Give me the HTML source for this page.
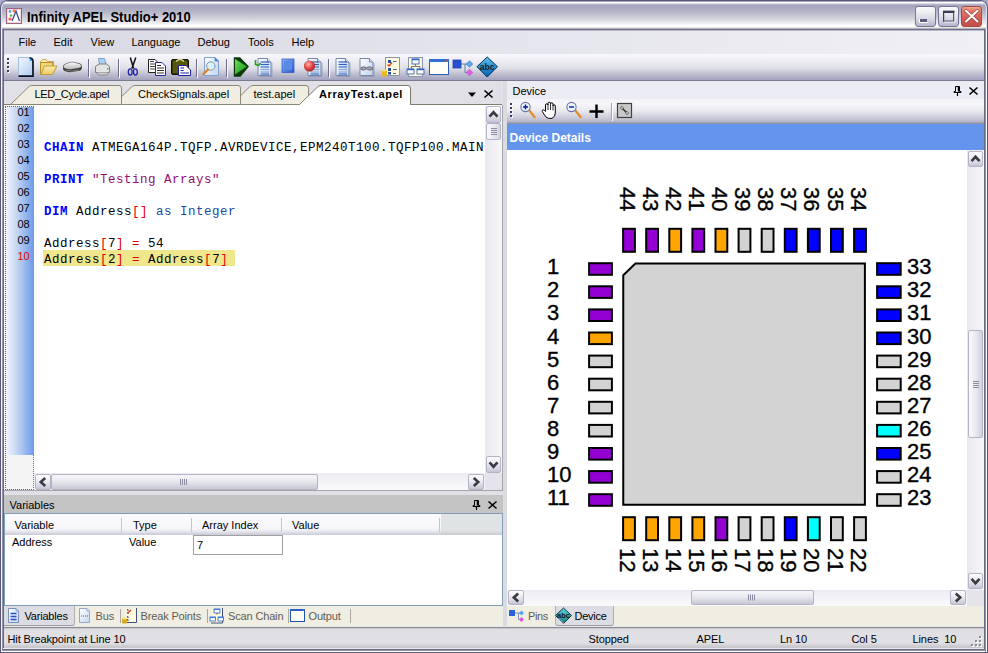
<!DOCTYPE html>
<html><head><meta charset="utf-8">
<style>
*{margin:0;padding:0;box-sizing:border-box}
html,body{width:988px;height:653px;overflow:hidden;background:#e3e3eb;font-family:"Liberation Sans",sans-serif;font-size:11px;color:#000}
.a{position:absolute}
.t{position:absolute;white-space:nowrap;line-height:1}
.mono{font-family:"Liberation Mono",monospace}
.sb{border:1px solid #b4b4c6;border-radius:2px}
svg{position:absolute;overflow:visible}
</style></head><body>

<div class="a" style="left:0;top:0;width:988px;height:10px;background:#a8a8c8"></div>
<div class="a" style="left:0;top:0;width:988px;height:31px;border-radius:8px 8px 0 0;background:#5a5a78"></div>
<div class="a" style="left:1px;top:1px;width:986px;height:30px;border-radius:7px 7px 0 0;box-shadow:inset 1px 0 0 #e4e4ee,inset -1px 0 0 #e4e4ee;background:linear-gradient(#a4a4bc 0px,#a4a4bc 1px,#ffffff 1px,#ffffff 2px,#dcdce6 2px,#dcdce6 3px,#b8b8cc 3px,#b8b8cc 4px,#a6a6c2 4px,#a8a8c2 6px,#b6b6c8 11px,#d4d4de 18px,#f2f2f4 23px,#ffffff 24px,#ffffff 26px,#e8e6dc 26px,#e8e6dc 27px,#b4b4c4 27px,#b4b4c4 28px,#70708a 28px,#70708a 29px,#b8b8c8 29px,#b8b8c8 30px)"></div>
<div class="t" style="left:27px;top:10px;font-size:14px;font-weight:bold;color:#000;transform-origin:0 0;transform:scaleX(0.925);white-space:pre">Infinity APEL Studio+ 2010</div>

<div class="a" style="left:915px;top:6px;width:21px;height:21px;border:1px solid #76769a;border-radius:3px;background:linear-gradient(#fafafc 0,#ececf2 30%,#d4d4e2 70%,#b4b4cc 100%)"></div>
<div class="a" style="left:938px;top:6px;width:21px;height:21px;border:1px solid #76769a;border-radius:3px;background:linear-gradient(#fafafc 0,#ececf2 30%,#d4d4e2 70%,#b4b4cc 100%)"></div>
<div class="a" style="left:961px;top:6px;width:21px;height:21px;border:1px solid #a44a48;border-radius:3px;background:linear-gradient(#f0a890 0,#e07868 20%,#d45c54 60%,#c44c48 100%)"></div>
<svg style="left:0;top:0" width="1" height="1"><rect x="920" y="19" width="7" height="3" fill="#5a5a7c"/><path d="M919.5 19v3.5h8" stroke="#fff" stroke-width="1" fill="none"/><rect x="943.6" y="11.4" width="10.2" height="9.8" fill="none" stroke="#3c3c54" stroke-width="1.2"/><rect x="943" y="10.8" width="11.4" height="2.2" fill="#3c3c54"/><path d="M944 22H955V12" fill="none" stroke="#fff" stroke-width="0.8"/><path d="M966 10.8L977.5 21.5M977.5 10.8L966 21.5" stroke="#8a3a38" stroke-width="3.2" stroke-linecap="round"/><path d="M966 10.8L977.5 21.5M977.5 10.8L966 21.5" stroke="#fff" stroke-width="2.1" stroke-linecap="round"/></svg>
<svg style="left:0;top:0" width="1" height="1"><rect x="6.5" y="8.5" width="15" height="15" fill="#fff" stroke="#a06080" stroke-width="1"/><rect x="7.5" y="9.5" width="13" height="13" fill="none" stroke="#e8d0d8" stroke-width="0.8"/><path d="M12 21L16 11L19.5 21" fill="none" stroke="#404890" stroke-width="1.3"/><circle cx="10" cy="11.5" r="1.4" fill="#60a0e0"/><circle cx="14" cy="11" r="1.4" fill="#f07040"/><circle cx="11" cy="15.5" r="1.3" fill="#60b060"/><circle cx="10" cy="19" r="1.6" fill="#f06040"/></svg>
<div class="a" style="left:4px;top:31px;width:980px;height:23px;background:linear-gradient(90deg,#d8d8e4,#f0f0f4)"></div>
<div class="t" style="left:18.5px;top:37px">File</div>
<div class="t" style="left:53.5px;top:37px">Edit</div>
<div class="t" style="left:90.5px;top:37px">View</div>
<div class="t" style="left:131.5px;top:37px">Language</div>
<div class="t" style="left:197.5px;top:37px">Debug</div>
<div class="t" style="left:248px;top:37px">Tools</div>
<div class="t" style="left:291.5px;top:37px">Help</div>
<div class="a" style="left:4px;top:54px;width:980px;height:27px;border-radius:3px 0 0 0;background:linear-gradient(#f8f8fc 0,#f0f0f6 5px,#e2e2ea 13px,#dcdce6 15px,#c4c4d4 19px,#a6a6c2 25px,#a4a4c0 26px,#7a7a92 26px,#7a7a92 27px)"></div>
<svg style="left:0;top:0" width="1" height="1"><defs><linearGradient id="gdoc" x1="0" y1="0" x2="1" y2="1"><stop offset="0" stop-color="#ffffff"/><stop offset="1" stop-color="#c0d4f0"/></linearGradient><linearGradient id="gnew" x1="0" y1="0" x2="1" y2="1"><stop offset="0" stop-color="#f4f8ff"/><stop offset="1" stop-color="#b0ccf0"/></linearGradient><linearGradient id="gfold" x1="0" y1="0" x2="0" y2="1"><stop offset="0" stop-color="#fff0b0"/><stop offset="1" stop-color="#e8c860"/></linearGradient><linearGradient id="gplay" x1="0" y1="0" x2="1" y2="1"><stop offset="0" stop-color="#70e060"/><stop offset="1" stop-color="#109010"/></linearGradient><radialGradient id="gball" cx="0.4" cy="0.35" r="0.65"><stop offset="0" stop-color="#ffc0b0"/><stop offset="0.5" stop-color="#e85050"/><stop offset="1" stop-color="#b02020"/></radialGradient><linearGradient id="gstop" x1="0" y1="0" x2="1" y2="1"><stop offset="0" stop-color="#90b4f4"/><stop offset="1" stop-color="#2458c8"/></linearGradient><linearGradient id="gabc" x1="0" y1="0" x2="0" y2="1"><stop offset="0" stop-color="#60c0f0"/><stop offset="1" stop-color="#0060b0"/></linearGradient></defs><rect x="8" y="59" width="2" height="2" fill="#fff"/><rect x="7" y="58" width="2" height="2" fill="#3c3c64"/><rect x="8" y="63" width="2" height="2" fill="#fff"/><rect x="7" y="62" width="2" height="2" fill="#3c3c64"/><rect x="8" y="67" width="2" height="2" fill="#fff"/><rect x="7" y="66" width="2" height="2" fill="#3c3c64"/><rect x="8" y="71" width="2" height="2" fill="#fff"/><rect x="7" y="70" width="2" height="2" fill="#3c3c64"/><rect x="88" y="59" width="1" height="18" fill="#6a6a90"/><rect x="89" y="60" width="1" height="18" fill="#fff"/><rect x="118" y="59" width="1" height="18" fill="#6a6a90"/><rect x="119" y="60" width="1" height="18" fill="#fff"/><rect x="196" y="59" width="1" height="18" fill="#6a6a90"/><rect x="197" y="60" width="1" height="18" fill="#fff"/><rect x="226" y="59" width="1" height="18" fill="#6a6a90"/><rect x="227" y="60" width="1" height="18" fill="#fff"/><rect x="328" y="59" width="1" height="18" fill="#6a6a90"/><rect x="329" y="60" width="1" height="18" fill="#fff"/><path d="M18.5 57.5H29.5L32.5 60.5V75.5H18.5Z" fill="url(#gnew)" stroke="#a8c0e0" stroke-width="1"/><path d="M29.5 57.8Q33 58 33 61.5V76.2H18.5" fill="none" stroke="#0c1428" stroke-width="1.7"/><path d="M29.5 57.8L32.5 60.8L30 61Z" fill="#3a8ae8"/><path d="M40.5 61.5L43 59.5H46L47.5 61.5H53.5V66H40.5Z" fill="#fcecaa" stroke="#d0a848" stroke-width="1"/><path d="M40.5 74.5V62.5H52.5V65.5" fill="#f0d878" stroke="#b89030" stroke-width="1"/><path d="M40.8 74.5L44.5 66H57L52.5 74.5Z" fill="url(#gfold)" stroke="#c09838" stroke-width="1"/><defs><linearGradient id="gdrv" x1="0" y1="0" x2="0" y2="1"><stop offset="0" stop-color="#fafafa"/><stop offset="1" stop-color="#b8b8b8"/></linearGradient></defs><path d="M63 66.5Q63 64.5 66 63.5L70 62Q72 61.5 74 62L80 63.5Q82 64.2 81.8 66V68.5Q81.5 70.5 78 71L72 72Q69 72.5 66 71.5L64 70.5Q63 70 63 68.5Z" fill="#404040"/><path d="M63.5 66.5Q63.5 65 66 64L70 62.5Q72 62 74 62.5L79.5 64Q81.5 64.8 81.3 66.2Q80.5 67.5 77 68.2L72 69Q69 69.5 66.5 68.8L64.5 68Q63.5 67.5 63.5 66.5Z" fill="url(#gdrv)"/><path d="M66 70L72 71.2L79 69.8" stroke="#909090" stroke-width="0.8" fill="none"/><path d="M98.5 58.5H104.5L106 64.5H99.5Z" fill="#a8d0f8" stroke="#7090b0" stroke-width="0.8"/><path d="M95.5 66.5L99 64H106.5L109.5 66.5V72.5H95.5Z" fill="#e4e4e4" stroke="#808080" stroke-width="1"/><path d="M97 72.5L98.5 75H107L108.5 72.5" fill="#d0d0d0" stroke="#808080" stroke-width="0.8"/><rect x="107" y="68" width="1.5" height="1.5" fill="#40b040"/><path d="M130.3 57.5L133.6 68.5M135.8 57.5L131.9 68.5" stroke="#101010" stroke-width="1.5"/><ellipse cx="130.2" cy="72" rx="1.9" ry="3.1" fill="none" stroke="#2020a8" stroke-width="1.3"/><ellipse cx="135.4" cy="72" rx="1.9" ry="3.1" fill="none" stroke="#2020a8" stroke-width="1.3"/><path d="M148.5 59.5H155L157.5 62V72.5H148.5Z" fill="#fff" stroke="#202020" stroke-width="1"/><path d="M150 61.5H154M150 64H156M150 66.5H156M150 69H156" stroke="#404040" stroke-width="1"/><path d="M155.5 62.5H162L165.5 66V75.5H155.5Z" fill="#fff" stroke="#2828a0" stroke-width="1"/><path d="M157 65.5H161M157 68H164M157 70.5H164M157 73H164" stroke="#303030" stroke-width="1"/><rect x="171.5" y="59.5" width="17" height="15" rx="1.5" fill="#3a3a08" stroke="#101000" stroke-width="1"/><rect x="173" y="61" width="14" height="12" fill="#6a6a10" opacity="0.6"/><path d="M176 61.5Q180 57.5 184 61.5" fill="none" stroke="#d8d890" stroke-width="1.4"/><path d="M178.5 65.5H186L190.5 70V75.5H178.5Z" fill="#fff" stroke="#2020a0" stroke-width="1"/><path d="M180.5 68H184M180.5 70.5H183.5M180.5 73H189" stroke="#2020a0" stroke-width="1"/><path d="M204.5 57.5H215L218.5 61V75.5H204.5Z" fill="url(#gdoc)" stroke="#80a0d0" stroke-width="1"/><path d="M215 57.5V61H218.5" fill="#4080e0" stroke="#4080e0" stroke-width="0.8"/><circle cx="210.8" cy="66" r="4.2" fill="#d8f4ff" stroke="#8090b0" stroke-width="1"/><path d="M208 69.5L203.5 74" stroke="#e08020" stroke-width="2.2" stroke-linecap="round"/><path d="M233.8 57.2H240L249 66.6L240.5 76.7H233.8Z" fill="#0a3a0a"/><path d="M235 59L247 66.6L235 74.5Z" fill="url(#gplay)"/><path d="M258.0 58.5H267.5L271.0 62V75.5H258.0Z" fill="url(#gdoc)" stroke="#7888a8" stroke-width="1"/><path d="M267.5 58.5V62H271.0" fill="#dce6f4" stroke="#7888a8" stroke-width="1"/><path d="M259.0 76.5H272.0V63" fill="none" stroke="#8090a8" stroke-width="1" opacity="0.6"/><path d="M260.5 62H269.0" stroke="#3060c0" stroke-width="1.2"/><path d="M260.5 64.5H269.0" stroke="#3060c0" stroke-width="1.2"/><path d="M260.5 67H269.0" stroke="#4070c8" stroke-width="1.2"/><path d="M260.5 69.5H269.0" stroke="#90a8d0" stroke-width="1.2"/><path d="M260.5 72H269.0" stroke="#90a8d0" stroke-width="1.2"/><path d="M260.5 74H269.0" stroke="#4070c8" stroke-width="1.2"/><path d="M255.5 60V64.5L258.5 65.5L260.5 63" fill="none" stroke="#20a020" stroke-width="1.6"/><rect x="282" y="59" width="12" height="13.5" fill="url(#gstop)" stroke="#3060d0" stroke-width="0.8"/><rect x="284" y="61" width="8" height="9" fill="#5a88e4"/><path d="M308.0 58.5H317.5L321.0 62V75.5H308.0Z" fill="url(#gdoc)" stroke="#7888a8" stroke-width="1"/><path d="M317.5 58.5V62H321.0" fill="#dce6f4" stroke="#7888a8" stroke-width="1"/><path d="M309.0 76.5H322.0V63" fill="none" stroke="#8090a8" stroke-width="1" opacity="0.6"/><path d="M310.5 62H319.0" stroke="#3060c0" stroke-width="1.2"/><path d="M310.5 64.5H319.0" stroke="#3060c0" stroke-width="1.2"/><path d="M310.5 67H319.0" stroke="#4070c8" stroke-width="1.2"/><path d="M310.5 69.5H319.0" stroke="#90a8d0" stroke-width="1.2"/><path d="M310.5 72H319.0" stroke="#90a8d0" stroke-width="1.2"/><path d="M310.5 74H319.0" stroke="#4070c8" stroke-width="1.2"/><circle cx="309.5" cy="66" r="5.6" fill="url(#gball)"/><path d="M336.0 58.5H345.5L349.0 62V75.5H336.0Z" fill="url(#gdoc)" stroke="#7888a8" stroke-width="1"/><path d="M345.5 58.5V62H349.0" fill="#dce6f4" stroke="#7888a8" stroke-width="1"/><path d="M337.0 76.5H350.0V63" fill="none" stroke="#8090a8" stroke-width="1" opacity="0.6"/><path d="M338.5 62H347.0" stroke="#3060c0" stroke-width="1.2"/><path d="M338.5 64.5H347.0" stroke="#3060c0" stroke-width="1.2"/><path d="M338.5 67H347.0" stroke="#4070c8" stroke-width="1.2"/><path d="M338.5 69.5H347.0" stroke="#90a8d0" stroke-width="1.2"/><path d="M338.5 72H347.0" stroke="#90a8d0" stroke-width="1.2"/><path d="M338.5 74H347.0" stroke="#4070c8" stroke-width="1.2"/><path d="M360.0 58.5H369.5L373.0 62V75.5H360.0Z" fill="url(#gdoc)" stroke="#7888a8" stroke-width="1"/><path d="M369.5 58.5V62H373.0" fill="#dce6f4" stroke="#7888a8" stroke-width="1"/><path d="M361.0 76.5H374.0V63" fill="none" stroke="#8090a8" stroke-width="1" opacity="0.6"/><path d="M361 67.5Q363.5 66 366.5 67.5Q369.5 66 372.5 67.5V69.5Q369.5 71 366.5 69Q363.5 71 361 69.5Z" fill="#a0a0a8" stroke="#606070" stroke-width="0.8"/><rect x="385.5" y="57.5" width="14" height="18" fill="#fffadc" stroke="#8898b0" stroke-width="1"/><rect x="388" y="60" width="3" height="3" fill="#2050a0"/><rect x="388" y="68" width="3" height="3" fill="#2050a0"/><rect x="388" y="72" width="3" height="2.5" fill="#2050a0"/><path d="M387.5 64.5L389 66L392 62.5" fill="none" stroke="#e04020" stroke-width="1.4"/><path d="M393 61.5H396.5M393 69.5H397M393 73.5H396" stroke="#5060a0" stroke-width="1"/><rect x="382" y="70" width="5" height="6.5" rx="1" fill="#e8b820"/><ellipse cx="384.5" cy="70.5" rx="2.5" ry="1" fill="#f8e080"/><rect x="408.5" y="57.5" width="14" height="19" fill="#fffadc" stroke="#8898b0" stroke-width="1"/><path d="M415.5 64V66.5H411.5V69M415.5 66.5H420V69" fill="none" stroke="#707888" stroke-width="1"/><rect x="412" y="59" width="7" height="5" fill="#fff" stroke="#5070b0" stroke-width="1"/><rect x="407" y="69" width="7" height="5" fill="#fff" stroke="#5070b0" stroke-width="1"/><rect x="417" y="69" width="7" height="5" fill="#fff" stroke="#5070b0" stroke-width="1"/><path d="M412 59.5H419M407 69.5H414M417 69.5H424" stroke="#3068d0" stroke-width="1.5"/><rect x="429.5" y="59.5" width="19" height="15" fill="#fffff8" stroke="#2a5cb8" stroke-width="1"/><rect x="429" y="59" width="20" height="3" fill="#3070d0"/><rect x="446" y="59.8" width="1.5" height="1.5" fill="#f06020"/><path d="M461 64H465V72.5H467" fill="none" stroke="#6080a8" stroke-width="1"/><path d="M465 64H467" stroke="#6080a8" stroke-width="1"/><rect x="453" y="60" width="8" height="8" fill="#2850d0" stroke="#2040b0" stroke-width="0.8"/><path d="M469.5 60.8L472.8 64L469.5 67.2L466.2 64Z" fill="#60a8f0" stroke="#3070c0" stroke-width="0.6"/><path d="M469.5 69.3L472.8 72.5L469.5 75.7L466.2 72.5Z" fill="#e060e0" stroke="#c040c0" stroke-width="0.6"/><path d="M487.2 57L497.5 66.7L487.2 77L477 66.7Z" fill="url(#gabc)" stroke="#003060" stroke-width="1"/><text x="487.2" y="69.5" font-family="Liberation Sans" font-size="8.5" font-weight="bold" fill="#1a1a28" text-anchor="middle">abc</text></svg>
<div class="a" style="left:4px;top:81px;width:498px;height:24px;background:#e0e0e6"></div>
<svg style="left:0;top:0" width="1" height="1">
 <line x1="4" y1="104.5" x2="502" y2="104.5" stroke="#7e7a6c" stroke-width="1"/>
 <path d="M231.5 104.5 L249 87.5 Q250.5 85.5 253 85.5 L306 85.5 Q308.5 85.5 308.5 88 L308.5 104.5 Z" fill="#f0eee2" stroke="#8c8878" stroke-width="1"/>
 <path d="M113.5 104.5 L131 87.5 Q132.5 85.5 135 85.5 L238 85.5 Q240.5 85.5 240.5 88 L240.5 104.5 Z" fill="#f0eee2" stroke="#8c8878" stroke-width="1"/>
 <path d="M10.5 104.5 L28 87.5 Q29.5 85.5 32 85.5 L119 85.5 Q121.5 85.5 121.5 88 L121.5 104.5 Z" fill="#f0eee2" stroke="#8c8878" stroke-width="1"/>
 <path d="M299.5 104.5 L317 87.5 Q318.5 85.5 321 85.5 L408 85.5 Q410.5 85.5 410.5 88 L410.5 104.5" fill="#ffffff" stroke="#7e7a6c" stroke-width="1"/>
 <rect x="300" y="104" width="110" height="1.5" fill="#fff"/>
 <path d="M468 92.5 L476 92.5 L472 97 Z" fill="#000"/>
 <path d="M484.5 90.5 L492.5 97.5 M492.5 90.5 L484.5 97.5" stroke="#000" stroke-width="1.6"/>
</svg>
<div class="t" style="left:34.5px;top:89px;letter-spacing:-0.3px">LED_Cycle.apel</div>
<div class="t" style="left:138px;top:89px">CheckSignals.apel</div>
<div class="t" style="left:253.5px;top:89px">test.apel</div>
<div class="t" style="left:319px;top:89px;font-weight:bold;letter-spacing:0.6px">ArrayTest.apel</div>

<div class="a" style="left:4px;top:105px;width:499px;height:386px;background:#fff;border-right:1px solid #a4a4ac;border-bottom:1px solid #a4a4ac"></div>
<div class="a" style="left:5px;top:106px;width:29px;height:384px;background:#f4f4f4;border-left:1px dotted #5a6478;border-top:1px dotted #5a6478;border-bottom:1px dotted #5a6478"></div>
<div class="a" style="left:6px;top:107px;width:28px;height:348px;background:linear-gradient(90deg,#f4f6fc 0,#c8d8f4 10px,#6c9ae8 28px)"></div>
<div class="a" style="left:33px;top:455px;width:1px;height:35px;border-right:1px dotted #3a7ae8"></div>

<div class="t" style="left:17.5px;top:107px;color:#000">01</div>
<div class="t" style="left:17.5px;top:123px;color:#000">02</div>
<div class="t" style="left:17.5px;top:139px;color:#000">03</div>
<div class="t" style="left:17.5px;top:155px;color:#000">04</div>
<div class="t" style="left:17.5px;top:171px;color:#000">05</div>
<div class="t" style="left:17.5px;top:187px;color:#000">06</div>
<div class="t" style="left:17.5px;top:203px;color:#000">07</div>
<div class="t" style="left:17.5px;top:219px;color:#000">08</div>
<div class="t" style="left:17.5px;top:235px;color:#000">09</div>
<div class="t" style="left:17.5px;top:251px;color:#e00000">10</div>
<div class="a" style="left:43px;top:250px;width:192px;height:16px;background:#f0e68c"></div>
<div class="mono" style="position:absolute;left:44px;top:107.5px;font-size:12.5px;letter-spacing:0.5px;line-height:16px;white-space:pre;color:#000">

<span style="color:#0000ff;font-weight:bold">CHAIN</span> ATMEGA164P.TQFP.AVRDEVICE,EPM240T100.TQFP100.MAIN

<span style="color:#0000ff;font-weight:bold">PRINT</span> <span style="color:#960c70">"Testing Arrays"</span>

<span style="color:#0000ff;font-weight:bold">DIM</span> Address<span style="color:#e00000">[]</span> <span style="color:#1c4aa0">as Integer</span>

Address<span style="color:#e00000">[</span>7<span style="color:#e00000">]</span> <span style="color:#e00000">=</span> 54
Address<span style="color:#e00000">[</span>2<span style="color:#e00000">]</span> <span style="color:#e00000">=</span> Address<span style="color:#e00000">[</span>7<span style="color:#e00000">]</span>
</div>
<div class="a" style="left:485px;top:106px;width:17px;height:367px;background:linear-gradient(90deg,#e8e8ee,#f8f8fa)"></div>
<div class="a" style="left:34px;top:473px;width:451px;height:17px;background:linear-gradient(#ececf2,#fafafc)"></div>
<div class="a" style="left:485px;top:473px;width:17px;height:17px;background:#e4e4ea"></div>
<div class="a sb" style="left:486px;top:106px;width:15px;height:17px;background:linear-gradient(#fdfdfe 0,#f0f0f6 35%,#d8d8e4 75%,#c4c4d4 100%)"></div><svg style="left:0;top:0" width="1" height="1"><path d="M489.5 116.7 L493.5 112.3 L497.5 116.7" fill="none" stroke="#3a3a42" stroke-width="2.6" stroke-linejoin="miter"/></svg>
<div class="a sb" style="left:486px;top:456px;width:15px;height:17px;background:linear-gradient(#fdfdfe 0,#f0f0f6 35%,#d8d8e4 75%,#c4c4d4 100%)"></div><svg style="left:0;top:0" width="1" height="1"><path d="M489.5 462.3 L493.5 466.7 L497.5 462.3" fill="none" stroke="#3a3a42" stroke-width="2.6" stroke-linejoin="miter"/></svg>
<div class="a sb" style="left:35px;top:474px;width:16px;height:16px;background:linear-gradient(#fdfdfe 0,#f0f0f6 35%,#d8d8e4 75%,#c4c4d4 100%)"></div><svg style="left:0;top:0" width="1" height="1"><path d="M45.2 478.0 L40.8 482.0 L45.2 486.0" fill="none" stroke="#3a3a42" stroke-width="2.6" stroke-linejoin="miter"/></svg>
<div class="a sb" style="left:468px;top:474px;width:16px;height:16px;background:linear-gradient(#fdfdfe 0,#f0f0f6 35%,#d8d8e4 75%,#c4c4d4 100%)"></div><svg style="left:0;top:0" width="1" height="1"><path d="M473.8 478.0 L478.2 482.0 L473.8 486.0" fill="none" stroke="#3a3a42" stroke-width="2.6" stroke-linejoin="miter"/></svg>
<div class="a sb" style="left:486px;top:123px;width:15px;height:17px;background:linear-gradient(90deg,#fafafd,#e6e6ee 60%,#d0d0dc)"></div>
<svg style="left:0;top:0" width="1" height="1"><path d="M491 128.5h6M491 130.5h6M491 132.5h6M491 134.5h6" stroke="#8c8ca0" stroke-width="1"/></svg>
<div class="a sb" style="left:51px;top:474px;width:267px;height:16px;background:linear-gradient(#f6f6fa,#e6e6ee 50%,#c8c8d6)"></div>
<svg style="left:0;top:0" width="1" height="1"><path d="M180.5 479v6M182.5 479v6M184.5 479v6M186.5 479v6" stroke="#8c8ca0" stroke-width="1"/></svg>
<div class="a" style="left:4px;top:491px;width:499px;height:4px;background:#e0e0e6"></div>
<div class="a" style="left:503px;top:81px;width:4px;height:546px;background:#dcdce0"></div>
<div class="a" style="left:4px;top:495px;width:499px;height:18px;background:#c4c4c4"></div>
<div class="t" style="left:9.5px;top:500px">Variables</div>
<svg style="left:0;top:0" width="1" height="1"><path d="M474.5 500.5h4v5h1.5v1h-7v-1h1.5z" fill="none" stroke="#000" stroke-width="1"/><path d="M476.5 506v4" stroke="#000" stroke-width="1.2"/><path d="M477.5 501v4.5" stroke="#000" stroke-width="1.5"/><path d="M488.5 501.5L496.5 508.5M496.5 501.5L488.5 508.5" stroke="#000" stroke-width="1.6"/></svg>
<div class="a" style="left:4px;top:513px;width:499px;height:93px;background:#fff;border:1px solid #7f9db9"></div>
<div class="a" style="left:5px;top:514px;width:436px;height:21px;background:linear-gradient(#fbfbfe 0,#f6f6fa 70%,#e4e4ec 85%,#c8c8d8 100%)"></div>
<div class="a" style="left:441px;top:514px;width:61px;height:21px;background:linear-gradient(#dfe3e3 0,#dfe3e3 80%,#c8cccc 100%)"></div>
<div class="a" style="left:121.0px;top:518px;width:1px;height:14px;background:#c4c4d4"></div>
<div class="a" style="left:191.0px;top:518px;width:1px;height:14px;background:#c4c4d4"></div>
<div class="a" style="left:281.0px;top:518px;width:1px;height:14px;background:#c4c4d4"></div>
<div class="a" style="left:439.0px;top:518px;width:1px;height:14px;background:#c4c4d4"></div>
<div class="t" style="left:14.5px;top:520px">Variable</div>
<div class="t" style="left:133px;top:520px">Type</div>
<div class="t" style="left:202px;top:520px">Array Index</div>
<div class="t" style="left:292px;top:520px">Value</div>
<div class="t" style="left:12px;top:537px">Address</div>
<div class="t" style="left:129px;top:537px">Value</div>
<div class="a" style="left:193px;top:535px;width:90px;height:20px;border:1px solid #a0a0a0;background:#fff"></div>
<div class="t" style="left:197px;top:540px">7</div>
<div class="a" style="left:4px;top:606px;width:499px;height:21px;background:#f0eee2"></div>
<div class="a" style="left:4px;top:606px;width:71px;height:20px;background:#dcdce4;border-right:1px solid #b0b0b8;border-bottom:1px solid #9c9ca4;border-radius:0 0 3px 0"></div>
<div class="t" style="left:24.5px;top:611px;letter-spacing:-0.2px">Variables</div>
<div class="t" style="left:95.5px;top:611px;color:#5e5c54;letter-spacing:-0.15px">Bus</div>
<div class="t" style="left:140.5px;top:611px;color:#5e5c54;letter-spacing:-0.15px">Break Points</div>
<div class="t" style="left:228px;top:611px;color:#5e5c54;letter-spacing:-0.15px">Scan Chain</div>
<div class="t" style="left:308.5px;top:611px;color:#5e5c54;letter-spacing:-0.15px">Output</div>
<div class="a" style="left:120.0px;top:609px;width:1px;height:14px;background:#a8a8a0"></div>
<div class="a" style="left:207.0px;top:609px;width:1px;height:14px;background:#a8a8a0"></div>
<div class="a" style="left:288.0px;top:609px;width:1px;height:14px;background:#a8a8a0"></div>
<div class="a" style="left:350.0px;top:609px;width:1px;height:14px;background:#a8a8a0"></div>
<div class="a" style="left:507px;top:81px;width:477px;height:18px;background:#ececf4"></div>
<div class="t" style="left:512.5px;top:86px">Device</div>
<svg style="left:0;top:0" width="1" height="1"><path d="M955.5 86.5h4v5h1.5v1h-7v-1h1.5z" fill="none" stroke="#000" stroke-width="1"/><path d="M957.5 92v4" stroke="#000" stroke-width="1.2"/><path d="M958.5 87v4.5" stroke="#000" stroke-width="1.5"/><path d="M969.5 87.5L977.5 94.5M977.5 87.5L969.5 94.5" stroke="#000" stroke-width="1.6"/></svg>
<div class="a" style="left:507px;top:99px;width:477px;height:25px;border-radius:3px 0 0 0;background:linear-gradient(#f4f4f8 0,#f6f6fa 5px,#e8e8ee 12px,#cacada 19px,#b4b4c8 23px,#9090a8 24px)"></div>
<svg style="left:0;top:0" width="1" height="1"><rect x="511" y="104" width="2" height="2" fill="#fff"/><rect x="510" y="103" width="2" height="2" fill="#3c3c64"/><rect x="511" y="108" width="2" height="2" fill="#fff"/><rect x="510" y="107" width="2" height="2" fill="#3c3c64"/><rect x="511" y="112" width="2" height="2" fill="#fff"/><rect x="510" y="111" width="2" height="2" fill="#3c3c64"/><rect x="511" y="116" width="2" height="2" fill="#fff"/><rect x="510" y="115" width="2" height="2" fill="#3c3c64"/><path d="M529 110L534.5 117" stroke="#e09030" stroke-width="2.4" stroke-linecap="round"/><circle cx="525.5" cy="107" r="4.6" fill="#e8f8ff" stroke="#7070a0" stroke-width="1.1"/><path d="M523 107H528M525.5 104.5V109.5" stroke="#1010a0" stroke-width="1.4"/><path d="M545.5 110.5V105Q545.5 103.8 546.7 103.8Q548 103.8 548 105V103.5Q548 102.2 549.2 102.2Q550.5 102.2 550.5 103.5V104Q550.5 102.8 551.7 102.8Q553 102.8 553 104V106Q553 104.8 554.1 104.8Q555.3 104.8 555.3 106V113Q555.3 117 552 118.3H548.5Q546 117.8 544.5 115L542.3 111.5Q541.8 110 543.2 109.8Q544.3 109.8 545.5 111.5Z" fill="#fff" stroke="#000" stroke-width="1"/><path d="M548 105V110M550.5 104V110M553 106V110.5" stroke="#000" stroke-width="0.8"/><path d="M575 110L580.5 117" stroke="#e09030" stroke-width="2.4" stroke-linecap="round"/><circle cx="571.5" cy="107" r="4.6" fill="#e8f8ff" stroke="#7070a0" stroke-width="1.1"/><path d="M569 107H574" stroke="#1010a0" stroke-width="1.4"/><path d="M589.5 111.5H603.5M596.5 104.5V118" stroke="#000" stroke-width="2.4"/><rect x="611" y="103" width="1" height="17" fill="#a0a0b4"/><rect x="612" y="104" width="1" height="17" fill="#fff"/><rect x="617.5" y="103.5" width="14" height="14" fill="#c8c8c8" stroke="#404040" stroke-width="1.2"/><path d="M621 107L628 114" stroke="#202020" stroke-width="1.2"/><circle cx="622" cy="108" r="1.3" fill="#fff" stroke="#202020" stroke-width="0.6"/><circle cx="627" cy="113" r="1.3" fill="#fff" stroke="#202020" stroke-width="0.6"/></svg>
<div class="a" style="left:507px;top:124px;width:477px;height:26px;background:#6495ed"></div>
<div class="t" style="left:509.5px;top:131.5px;font-size:12px;font-weight:bold;color:#fff">Device Details</div>
<div class="a" style="left:507px;top:150px;width:477px;height:440px;background:#fff"></div>
<div class="a" style="left:967px;top:150px;width:17px;height:440px;background:linear-gradient(90deg,#e8e8ee,#f8f8fa)"></div>
<div class="a" style="left:507px;top:590px;width:460px;height:16px;background:linear-gradient(#ececf2,#fafafc)"></div>
<div class="a" style="left:967px;top:590px;width:17px;height:16px;background:#e4e4ea"></div>
<div class="a sb" style="left:968px;top:151px;width:15px;height:16px;background:linear-gradient(#fdfdfe 0,#f0f0f6 35%,#d8d8e4 75%,#c4c4d4 100%)"></div><svg style="left:0;top:0" width="1" height="1"><path d="M971.5 161.2 L975.5 156.8 L979.5 161.2" fill="none" stroke="#3a3a42" stroke-width="2.6" stroke-linejoin="miter"/></svg>
<div class="a sb" style="left:968px;top:573px;width:15px;height:16px;background:linear-gradient(#fdfdfe 0,#f0f0f6 35%,#d8d8e4 75%,#c4c4d4 100%)"></div><svg style="left:0;top:0" width="1" height="1"><path d="M971.5 578.8 L975.5 583.2 L979.5 578.8" fill="none" stroke="#3a3a42" stroke-width="2.6" stroke-linejoin="miter"/></svg>
<div class="a sb" style="left:508px;top:590px;width:16px;height:15px;background:linear-gradient(#fdfdfe 0,#f0f0f6 35%,#d8d8e4 75%,#c4c4d4 100%)"></div><svg style="left:0;top:0" width="1" height="1"><path d="M518.2 593.5 L513.8 597.5 L518.2 601.5" fill="none" stroke="#3a3a42" stroke-width="2.6" stroke-linejoin="miter"/></svg>
<div class="a sb" style="left:950px;top:590px;width:16px;height:15px;background:linear-gradient(#fdfdfe 0,#f0f0f6 35%,#d8d8e4 75%,#c4c4d4 100%)"></div><svg style="left:0;top:0" width="1" height="1"><path d="M955.8 593.5 L960.2 597.5 L955.8 601.5" fill="none" stroke="#3a3a42" stroke-width="2.6" stroke-linejoin="miter"/></svg>
<div class="a sb" style="left:968px;top:330px;width:15px;height:108px;background:linear-gradient(90deg,#fafafd,#e6e6ee 60%,#d0d0dc)"></div>
<svg style="left:0;top:0" width="1" height="1"><path d="M973 381.5h6M973 383.5h6M973 385.5h6M973 387.5h6" stroke="#8c8ca0" stroke-width="1"/></svg>
<div class="a sb" style="left:691px;top:590px;width:123px;height:15px;background:linear-gradient(#f6f6fa,#e6e6ee 50%,#c8c8d6)"></div>
<svg style="left:0;top:0" width="1" height="1"><path d="M748.5 594.5v6M750.5 594.5v6M752.5 594.5v6M754.5 594.5v6" stroke="#8c8ca0" stroke-width="1"/></svg>
<div class="a" style="left:507px;top:606px;width:477px;height:21px;background:#f0eee2"></div>
<div class="a" style="left:555px;top:606px;width:59px;height:20px;background:#dcdce4;border-left:1px solid #b0b0b8;border-right:1px solid #b0b0b8;border-bottom:1px solid #9c9ca4;border-radius:0 0 3px 3px"></div>
<div class="t" style="left:528px;top:611px;color:#5e5c54;letter-spacing:-0.4px">Pins</div>
<div class="t" style="left:574.5px;top:611px;letter-spacing:-0.25px">Device</div>
<svg style="left:0;top:0" width="1" height="1"><defs><linearGradient id="gdoc2" x1="0" y1="0" x2="1" y2="1"><stop offset="0" stop-color="#ffffff"/><stop offset="1" stop-color="#c4d6f0"/></linearGradient><linearGradient id="gteal" x1="0" y1="0" x2="0" y2="1"><stop offset="0" stop-color="#60d0e0"/><stop offset="1" stop-color="#108080"/></linearGradient></defs><path d="M8.5 608.5H16L18.5 611V622.5H8.5Z" fill="url(#gdoc2)" stroke="#7890b8" stroke-width="1"/><path d="M16 608.5V611H18.5" fill="#c8d8f0" stroke="#7890b8" stroke-width="0.8"/><path d="M10.5 613.5H16.5M10.5 616.5H16.5M10.5 619.5H16.5" stroke="#2a50c8" stroke-width="1.3"/><path d="M79.5 608.5H87L89.5 611V622.5H79.5Z" fill="url(#gdoc2)" stroke="#98a8c8" stroke-width="1"/><path d="M87 608.5V611H89.5" fill="#c8d8f0" stroke="#98a8c8" stroke-width="0.8"/><path d="M81 616H88.5" stroke="#506090" stroke-width="1" stroke-dasharray="1 1"/><path d="M125.5 608.5H136.5V622.5H125.5Z" fill="#fffadc" stroke="none"/><path d="M136.5 608V622.5H126" fill="none" stroke="#405080" stroke-width="1"/><path d="M127 609.5L128.5 610.5M127 612.5L128.5 613.5M127 616.5L128.5 617.5M127 619.5L128.5 620.5" stroke="#1a3a90" stroke-width="1.3"/><path d="M128 613L131 610" stroke="#e03820" stroke-width="1.2"/><rect x="122" y="618" width="5" height="5.5" rx="0.8" fill="#d8a820"/><ellipse cx="124.5" cy="618.5" rx="2.5" ry="0.9" fill="#f8e080"/><path d="M212 608.5H222.5V623H212Z" fill="#fffadc"/><path d="M222.5 608V623H211" fill="none" stroke="#405080" stroke-width="1"/><rect x="214" y="609" width="6" height="4" fill="#fff" stroke="#3060c0" stroke-width="0.8"/><path d="M214 609.5H220" stroke="#3a80e8" stroke-width="1.2"/><rect x="210" y="617" width="5.5" height="4" fill="#fff" stroke="#3060c0" stroke-width="0.8"/><path d="M210 617.5H215.5" stroke="#3a80e8" stroke-width="1.2"/><rect x="218" y="617" width="5.5" height="4" fill="#fff" stroke="#3060c0" stroke-width="0.8"/><path d="M218 617.5H223.5" stroke="#3a80e8" stroke-width="1.2"/><path d="M217 613V614.5" stroke="#405080" stroke-width="1"/><rect x="290.5" y="609.5" width="14" height="12" fill="#fffff4" stroke="#2050b0" stroke-width="1"/><rect x="290" y="609" width="15" height="2" fill="#2a60c8"/><rect x="303" y="609.5" width="1.2" height="1.2" fill="#f06020"/><path d="M515 613H518.5V619.5H520" fill="none" stroke="#8090b0" stroke-width="1"/><path d="M518.5 613H520" stroke="#8090b0" stroke-width="1"/><rect x="509" y="610" width="6" height="6" fill="#2a60e0"/><path d="M521.5 610.5L524 613L521.5 615.5L519 613Z" fill="#50a8f0"/><path d="M521.5 617L524 619.5L521.5 622L519 619.5Z" fill="#e050e0"/><path d="M563.5 608L571.5 615.5L563.5 623.5L555.5 615.5Z" fill="url(#gteal)" stroke="#103838" stroke-width="1"/><path d="M558 618L564 623.5" stroke="#f0f0f0" stroke-width="0.8" opacity="0.6"/><text x="563.5" y="618" font-family="Liberation Sans" font-size="7.5" font-weight="bold" fill="#101820" text-anchor="middle">abc</text></svg>
<div class="a" style="left:4px;top:626px;width:980px;height:22px;background:linear-gradient(#e8e8ec 0,#e8e8ec 1px,#8a8a90 1px,#8a8a90 2px,#b8b8c0 2px,#d8d8de 3px,#dfdfe4 4px,#dfdfe4 17px,#d4d4d8 19px,#c8c8cc 21px,#c8c8cc 22px)"></div>
<div class="t" style="left:7.5px;top:634px;letter-spacing:-0.1px">Hit Breakpoint at Line 10</div>
<div class="t" style="left:588.5px;top:634px;letter-spacing:-0.1px">Stopped</div>
<div class="t" style="left:696.5px;top:634px;letter-spacing:-0.1px">APEL</div>
<div class="t" style="left:780px;top:634px;letter-spacing:-0.1px">Ln 10</div>
<div class="t" style="left:851.5px;top:634px;letter-spacing:-0.1px">Col 5</div>
<div class="t" style="left:912.5px;top:634px;letter-spacing:-0.1px">Lines&nbsp; 10</div>
<svg style="left:0;top:0" width="1" height="1"><path d="M623.25 275.2 L635.4 263.5 L864.9 263.5 L864.9 504.8 L623.25 504.8 Z" fill="#d3d3d3" stroke="#000" stroke-width="2"/><rect x="589.1" y="263.2" width="22.8" height="11.6" fill="#9400d3" stroke="#000" stroke-width="2"/><rect x="877.1" y="263.2" width="23.6" height="11.6" fill="#0000ff" stroke="#000" stroke-width="2"/><rect x="623.1" y="228.8" width="11.8" height="23" fill="#9400d3" stroke="#000" stroke-width="2"/><rect x="623.1" y="517.2" width="11.8" height="23" fill="#ffa500" stroke="#000" stroke-width="2"/><rect x="589.1" y="286.3" width="22.8" height="11.6" fill="#9400d3" stroke="#000" stroke-width="2"/><rect x="877.1" y="286.3" width="23.6" height="11.6" fill="#0000ff" stroke="#000" stroke-width="2"/><rect x="646.2" y="228.8" width="11.8" height="23" fill="#9400d3" stroke="#000" stroke-width="2"/><rect x="646.2" y="517.2" width="11.8" height="23" fill="#ffa500" stroke="#000" stroke-width="2"/><rect x="589.1" y="309.4" width="22.8" height="11.6" fill="#9400d3" stroke="#000" stroke-width="2"/><rect x="877.1" y="309.4" width="23.6" height="11.6" fill="#0000ff" stroke="#000" stroke-width="2"/><rect x="669.3000000000001" y="228.8" width="11.8" height="23" fill="#ffa500" stroke="#000" stroke-width="2"/><rect x="669.3000000000001" y="517.2" width="11.8" height="23" fill="#ffa500" stroke="#000" stroke-width="2"/><rect x="589.1" y="332.5" width="22.8" height="11.6" fill="#ffa500" stroke="#000" stroke-width="2"/><rect x="877.1" y="332.5" width="23.6" height="11.6" fill="#0000ff" stroke="#000" stroke-width="2"/><rect x="692.4000000000001" y="228.8" width="11.8" height="23" fill="#9400d3" stroke="#000" stroke-width="2"/><rect x="692.4000000000001" y="517.2" width="11.8" height="23" fill="#ffa500" stroke="#000" stroke-width="2"/><rect x="589.1" y="355.6" width="22.8" height="11.6" fill="#d3d3d3" stroke="#000" stroke-width="2"/><rect x="877.1" y="355.6" width="23.6" height="11.6" fill="#d3d3d3" stroke="#000" stroke-width="2"/><rect x="715.5" y="228.8" width="11.8" height="23" fill="#ffa500" stroke="#000" stroke-width="2"/><rect x="715.5" y="517.2" width="11.8" height="23" fill="#9400d3" stroke="#000" stroke-width="2"/><rect x="589.1" y="378.7" width="22.8" height="11.6" fill="#d3d3d3" stroke="#000" stroke-width="2"/><rect x="877.1" y="378.7" width="23.6" height="11.6" fill="#d3d3d3" stroke="#000" stroke-width="2"/><rect x="738.6" y="228.8" width="11.8" height="23" fill="#d3d3d3" stroke="#000" stroke-width="2"/><rect x="738.6" y="517.2" width="11.8" height="23" fill="#d3d3d3" stroke="#000" stroke-width="2"/><rect x="589.1" y="401.8" width="22.8" height="11.6" fill="#d3d3d3" stroke="#000" stroke-width="2"/><rect x="877.1" y="401.8" width="23.6" height="11.6" fill="#d3d3d3" stroke="#000" stroke-width="2"/><rect x="761.7" y="228.8" width="11.8" height="23" fill="#d3d3d3" stroke="#000" stroke-width="2"/><rect x="761.7" y="517.2" width="11.8" height="23" fill="#d3d3d3" stroke="#000" stroke-width="2"/><rect x="589.1" y="424.9" width="22.8" height="11.6" fill="#d3d3d3" stroke="#000" stroke-width="2"/><rect x="877.1" y="424.9" width="23.6" height="11.6" fill="#00ffff" stroke="#000" stroke-width="2"/><rect x="784.8000000000001" y="228.8" width="11.8" height="23" fill="#0000ff" stroke="#000" stroke-width="2"/><rect x="784.8000000000001" y="517.2" width="11.8" height="23" fill="#0000ff" stroke="#000" stroke-width="2"/><rect x="589.1" y="448.0" width="22.8" height="11.6" fill="#9400d3" stroke="#000" stroke-width="2"/><rect x="877.1" y="448.0" width="23.6" height="11.6" fill="#0000ff" stroke="#000" stroke-width="2"/><rect x="807.9000000000001" y="228.8" width="11.8" height="23" fill="#0000ff" stroke="#000" stroke-width="2"/><rect x="807.9000000000001" y="517.2" width="11.8" height="23" fill="#00ffff" stroke="#000" stroke-width="2"/><rect x="589.1" y="471.1" width="22.8" height="11.6" fill="#9400d3" stroke="#000" stroke-width="2"/><rect x="877.1" y="471.1" width="23.6" height="11.6" fill="#d3d3d3" stroke="#000" stroke-width="2"/><rect x="831.0" y="228.8" width="11.8" height="23" fill="#0000ff" stroke="#000" stroke-width="2"/><rect x="831.0" y="517.2" width="11.8" height="23" fill="#d3d3d3" stroke="#000" stroke-width="2"/><rect x="589.1" y="494.2" width="22.8" height="11.6" fill="#9400d3" stroke="#000" stroke-width="2"/><rect x="877.1" y="494.2" width="23.6" height="11.6" fill="#d3d3d3" stroke="#000" stroke-width="2"/><rect x="854.1" y="228.8" width="11.8" height="23" fill="#0000ff" stroke="#000" stroke-width="2"/><rect x="854.1" y="517.2" width="11.8" height="23" fill="#d3d3d3" stroke="#000" stroke-width="2"/></svg>
<div class="t" style="left:547px;top:256.2px;font-size:22px;-webkit-text-stroke:0.35px #000">1</div>
<div class="t" style="left:907px;top:256.2px;font-size:22px;-webkit-text-stroke:0.35px #000">33</div>
<div class="t" style="left:637.6px;top:186.5px;font-size:22px;-webkit-text-stroke:0.35px #000;transform-origin:0 0;transform:rotate(90deg)">44</div>
<div class="t" style="left:637.6px;top:547.5px;font-size:22px;-webkit-text-stroke:0.35px #000;transform-origin:0 0;transform:rotate(90deg)">12</div>
<div class="t" style="left:547px;top:279.3px;font-size:22px;-webkit-text-stroke:0.35px #000">2</div>
<div class="t" style="left:907px;top:279.3px;font-size:22px;-webkit-text-stroke:0.35px #000">32</div>
<div class="t" style="left:660.7px;top:186.5px;font-size:22px;-webkit-text-stroke:0.35px #000;transform-origin:0 0;transform:rotate(90deg)">43</div>
<div class="t" style="left:660.7px;top:547.5px;font-size:22px;-webkit-text-stroke:0.35px #000;transform-origin:0 0;transform:rotate(90deg)">13</div>
<div class="t" style="left:547px;top:302.4px;font-size:22px;-webkit-text-stroke:0.35px #000">3</div>
<div class="t" style="left:907px;top:302.4px;font-size:22px;-webkit-text-stroke:0.35px #000">31</div>
<div class="t" style="left:683.8000000000001px;top:186.5px;font-size:22px;-webkit-text-stroke:0.35px #000;transform-origin:0 0;transform:rotate(90deg)">42</div>
<div class="t" style="left:683.8000000000001px;top:547.5px;font-size:22px;-webkit-text-stroke:0.35px #000;transform-origin:0 0;transform:rotate(90deg)">14</div>
<div class="t" style="left:547px;top:325.5px;font-size:22px;-webkit-text-stroke:0.35px #000">4</div>
<div class="t" style="left:907px;top:325.5px;font-size:22px;-webkit-text-stroke:0.35px #000">30</div>
<div class="t" style="left:706.9000000000001px;top:186.5px;font-size:22px;-webkit-text-stroke:0.35px #000;transform-origin:0 0;transform:rotate(90deg)">41</div>
<div class="t" style="left:706.9000000000001px;top:547.5px;font-size:22px;-webkit-text-stroke:0.35px #000;transform-origin:0 0;transform:rotate(90deg)">15</div>
<div class="t" style="left:547px;top:348.6px;font-size:22px;-webkit-text-stroke:0.35px #000">5</div>
<div class="t" style="left:907px;top:348.6px;font-size:22px;-webkit-text-stroke:0.35px #000">29</div>
<div class="t" style="left:730.0px;top:186.5px;font-size:22px;-webkit-text-stroke:0.35px #000;transform-origin:0 0;transform:rotate(90deg)">40</div>
<div class="t" style="left:730.0px;top:547.5px;font-size:22px;-webkit-text-stroke:0.35px #000;transform-origin:0 0;transform:rotate(90deg)">16</div>
<div class="t" style="left:547px;top:371.7px;font-size:22px;-webkit-text-stroke:0.35px #000">6</div>
<div class="t" style="left:907px;top:371.7px;font-size:22px;-webkit-text-stroke:0.35px #000">28</div>
<div class="t" style="left:753.1px;top:186.5px;font-size:22px;-webkit-text-stroke:0.35px #000;transform-origin:0 0;transform:rotate(90deg)">39</div>
<div class="t" style="left:753.1px;top:547.5px;font-size:22px;-webkit-text-stroke:0.35px #000;transform-origin:0 0;transform:rotate(90deg)">17</div>
<div class="t" style="left:547px;top:394.8px;font-size:22px;-webkit-text-stroke:0.35px #000">7</div>
<div class="t" style="left:907px;top:394.8px;font-size:22px;-webkit-text-stroke:0.35px #000">27</div>
<div class="t" style="left:776.2px;top:186.5px;font-size:22px;-webkit-text-stroke:0.35px #000;transform-origin:0 0;transform:rotate(90deg)">38</div>
<div class="t" style="left:776.2px;top:547.5px;font-size:22px;-webkit-text-stroke:0.35px #000;transform-origin:0 0;transform:rotate(90deg)">18</div>
<div class="t" style="left:547px;top:417.9px;font-size:22px;-webkit-text-stroke:0.35px #000">8</div>
<div class="t" style="left:907px;top:417.9px;font-size:22px;-webkit-text-stroke:0.35px #000">26</div>
<div class="t" style="left:799.3000000000001px;top:186.5px;font-size:22px;-webkit-text-stroke:0.35px #000;transform-origin:0 0;transform:rotate(90deg)">37</div>
<div class="t" style="left:799.3000000000001px;top:547.5px;font-size:22px;-webkit-text-stroke:0.35px #000;transform-origin:0 0;transform:rotate(90deg)">19</div>
<div class="t" style="left:547px;top:441.0px;font-size:22px;-webkit-text-stroke:0.35px #000">9</div>
<div class="t" style="left:907px;top:441.0px;font-size:22px;-webkit-text-stroke:0.35px #000">25</div>
<div class="t" style="left:822.4000000000001px;top:186.5px;font-size:22px;-webkit-text-stroke:0.35px #000;transform-origin:0 0;transform:rotate(90deg)">36</div>
<div class="t" style="left:822.4000000000001px;top:547.5px;font-size:22px;-webkit-text-stroke:0.35px #000;transform-origin:0 0;transform:rotate(90deg)">20</div>
<div class="t" style="left:547px;top:464.1px;font-size:22px;-webkit-text-stroke:0.35px #000">10</div>
<div class="t" style="left:907px;top:464.1px;font-size:22px;-webkit-text-stroke:0.35px #000">24</div>
<div class="t" style="left:845.5px;top:186.5px;font-size:22px;-webkit-text-stroke:0.35px #000;transform-origin:0 0;transform:rotate(90deg)">35</div>
<div class="t" style="left:845.5px;top:547.5px;font-size:22px;-webkit-text-stroke:0.35px #000;transform-origin:0 0;transform:rotate(90deg)">21</div>
<div class="t" style="left:547px;top:487.2px;font-size:22px;-webkit-text-stroke:0.35px #000">11</div>
<div class="t" style="left:907px;top:487.2px;font-size:22px;-webkit-text-stroke:0.35px #000">23</div>
<div class="t" style="left:868.6px;top:186.5px;font-size:22px;-webkit-text-stroke:0.35px #000;transform-origin:0 0;transform:rotate(90deg)">34</div>
<div class="t" style="left:868.6px;top:547.5px;font-size:22px;-webkit-text-stroke:0.35px #000;transform-origin:0 0;transform:rotate(90deg)">22</div>
<div class="a" style="left:0;top:29px;width:4px;height:624px;background:linear-gradient(90deg,#5a5a78 0,#5a5a78 1px,#f4f4f8 1px,#f4f4f8 2px,#9090a8 2px,#9090a8 3px,#6a6a88 3px)"></div>
<div class="a" style="left:984px;top:29px;width:4px;height:624px;background:linear-gradient(90deg,#6a6a88 0,#6a6a88 1px,#9090a8 1px,#9090a8 2px,#ffffff 2px,#ffffff 3px,#5a5a78 3px)"></div>
<div class="a" style="left:3px;top:648px;width:981px;height:1px;background:#ececf0"></div>
<div class="a" style="left:2px;top:649px;width:983px;height:4px;background:linear-gradient(#6a6a88 0,#6a6a88 1px,#9090a8 1px,#9090a8 2px,#ffffff 2px,#ffffff 3px,#5a5a78 3px)"></div>
<div class="a" style="left:0;top:652px;width:988px;height:1px;background:#5a5a78"></div>
<div class="a" style="left:1px;top:29px;width:1px;height:623px;background:#f4f4f8"></div>
<div class="a" style="left:986px;top:29px;width:1px;height:623px;background:#ffffff"></div>
<svg style="left:0;top:0" width="1" height="1"><rect x="980" y="637" width="2" height="2" fill="#fff"/><rect x="979" y="636" width="2" height="2" fill="#8c8c94"/><rect x="976" y="641" width="2" height="2" fill="#fff"/><rect x="975" y="640" width="2" height="2" fill="#8c8c94"/><rect x="980" y="641" width="2" height="2" fill="#fff"/><rect x="979" y="640" width="2" height="2" fill="#8c8c94"/><rect x="972" y="645" width="2" height="2" fill="#fff"/><rect x="971" y="644" width="2" height="2" fill="#8c8c94"/><rect x="976" y="645" width="2" height="2" fill="#fff"/><rect x="975" y="644" width="2" height="2" fill="#8c8c94"/><rect x="980" y="645" width="2" height="2" fill="#fff"/><rect x="979" y="644" width="2" height="2" fill="#8c8c94"/></svg>
</body></html>
